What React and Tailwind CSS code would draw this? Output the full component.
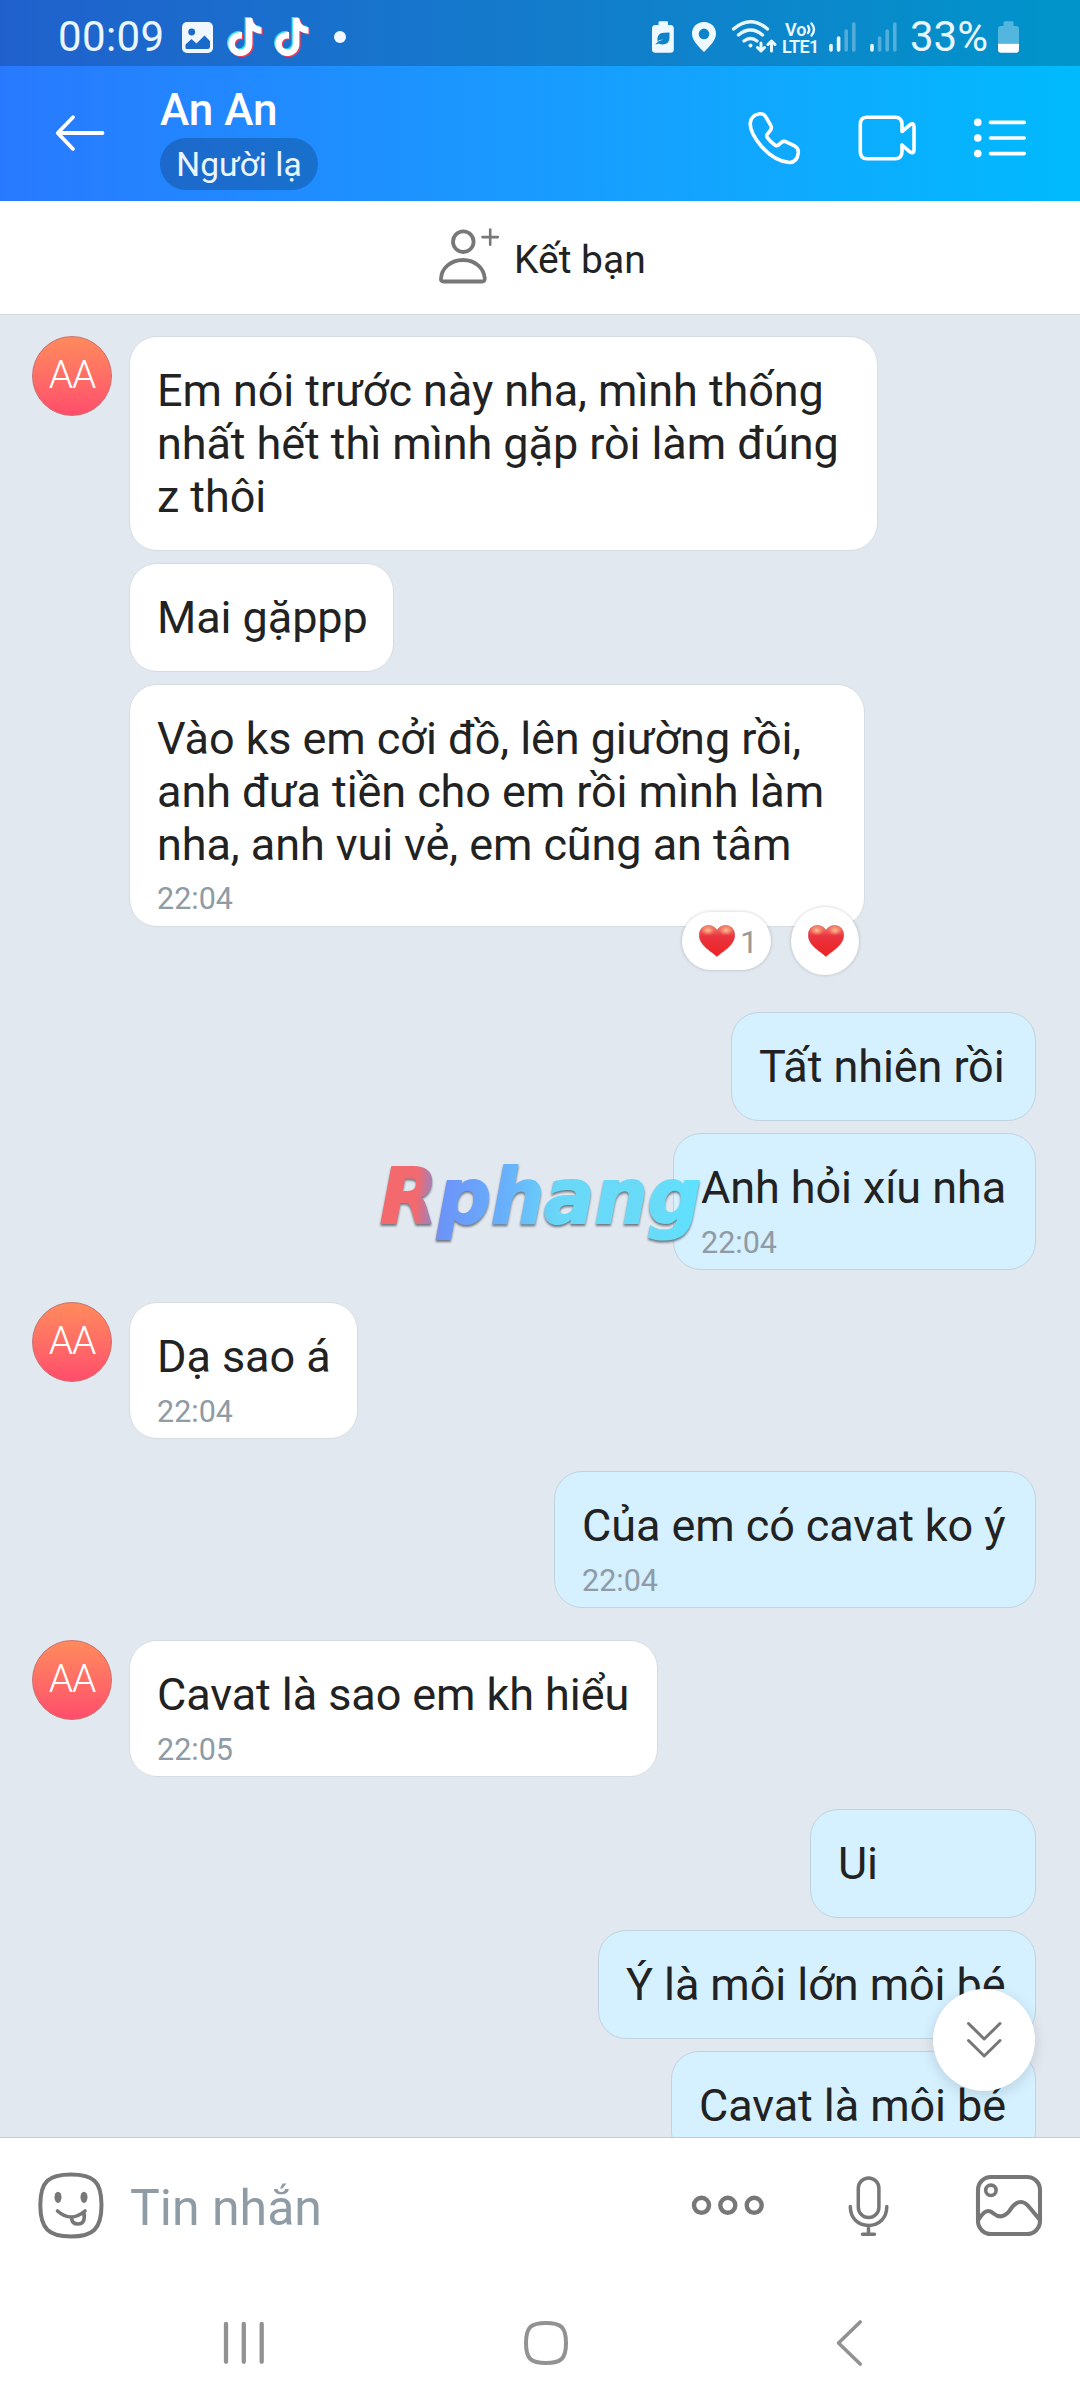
import { FaTiktok } from 'react-icons/fa6'
import clsx from 'clsx'

const groups = [
    {
        from: 'them',
        space: 'mt-[21px]',
        messages: [
            { lines: ['Em nói trước này nha, mình thống', 'nhất hết thì mình gặp ròi làm đúng', 'z thôi'], size: 'w-[749px] h-[215px]' },
            { lines: ['Mai gặppp'], size: 'w-[265px] h-[109px]' },
            {
                lines: ['Vào ks em cởi đồ, lên giường rồi,', 'anh đưa tiền cho em rồi mình làm', 'nha, anh vui vẻ, em cũng an tâm'],
                time: '22:04',
                size: 'w-[736px] h-[243px]',
                reactions: true
            }
        ]
    },
    {
        from: 'me',
        space: 'mt-[85px]',
        messages: [
            { lines: ['Tất nhiên rồi'], size: 'w-[305px] h-[109px]' },
            { lines: ['Anh hỏi xíu nha'], time: '22:04', size: 'w-[363px] h-[137px]' }
        ]
    },
    { from: 'them', space: 'mt-8', messages: [{ lines: ['Dạ sao á'], time: '22:04', size: 'w-[229px] h-[137px]' }] },
    { from: 'me', space: 'mt-8', messages: [{ lines: ['Của em có cavat ko ý'], time: '22:04', size: 'w-[482px] h-[137px]' }] },
    { from: 'them', space: 'mt-8', messages: [{ lines: ['Cavat là sao em kh hiểu'], time: '22:05', size: 'w-[529px] h-[137px]' }] },
    {
        from: 'me',
        space: 'mt-8',
        messages: [
            { lines: ['Ui'], size: 'w-[226px] h-[109px]' },
            { lines: ['Ý là môi lớn môi bé'], size: 'w-[438px] h-[109px]' },
            { lines: ['Cavat là môi bé'], size: 'w-[365px] h-[109px]' }
        ]
    }
]

// Line icon: rounded strokes, drawn at 1:1 in its viewBox
function LineIcon({ box, width = 3.6, className, children }) {
    const [, , w, h] = box.split(' ')
    return (
        <svg viewBox={box} width={w} height={h} fill="none" stroke="currentColor" strokeWidth={width} strokeLinecap="round" strokeLinejoin="round" className={clsx('block shrink-0', className)}>
            {children}
        </svg>
    )
}

function TiktokIcon({ className }) {
    return (
        <svg viewBox="0 0 36 42" width="36" height="42" className={clsx('block shrink-0', className)}>
            <FaTiktok x="-2.4" y="0" size={38} color="#35e0ee" />
            <FaTiktok x="0.2" y="2.2" size={38} color="#ee3a5f" />
            <FaTiktok x="-1.1" y="1.1" size={38} color="#ffffff" />
        </svg>
    )
}

function Signal({ active, className }) {
    const tops = [45.5, 38, 31, 24]
    return (
        <LineIcon box="829 20 28 34" width={3.6} className={className}>
            {tops.map((top, i) => (
                <path key={top} d={`M${831 + i * 7.6} ${top}V50`} opacity={i < active ? 1 : 0.33} />
            ))}
        </LineIcon>
    )
}

function StatusBar() {
    return (
        <div className="flex h-[66px] items-start bg-black/20 text-[#eaf6ff]">
            <span className="mt-[11px] ml-[58px] w-[124px] text-[42px] leading-[52px] tracking-[0.4px] whitespace-nowrap">00:09</span>
            <svg viewBox="0 0 31 31" width="31" height="31" className="mt-[22px] block shrink-0">
                <rect width="31" height="31" rx="5" fill="#f0f7ff" />
                <circle cx="9.7" cy="10" r="3.4" fill="#1a6aca" />
                <path d="M3.5 26V22.5L9.5 17L14.5 21.5L22.5 13.5L28 19V24.5Q28 27 25.5 27H5Q3.5 27 3.5 26Z" fill="#1a6aca" />
            </svg>
            <TiktokIcon className="mt-[17px] ml-[14px]" />
            <TiktokIcon className="mt-[17px] ml-[11px]" />
            <div className="mt-[31px] ml-[24px] size-3 shrink-0 rounded-full bg-[#f0f7ff]" />

            <svg viewBox="652 21 22 32" width="22" height="32" className="mt-[21px] ml-[306px] block shrink-0">
                <path d="M658.5 25V22.5Q658.5 21.3 660 21.3H666.5Q668 21.3 668 22.5V25H670.5Q673.8 25 673.8 28.5V49.5Q673.8 52.7 670.5 52.7H655.5Q652 52.7 652 49.5V28.5Q652 25 655.5 25Z" fill="#eef8ff" />
                <path d="M669.5 32.5V38Q669 44.5 662.5 44.5Q660 44.5 659 43.5L655.5 44.5Q657 41 663.5 39.5Q659 39.5 657.5 41.5Q656.5 33 664 32.8Z" fill="#0c82c8" />
            </svg>
            <svg viewBox="692 22 24 31" width="24" height="31" className="mt-[22px] ml-[18px] block shrink-0">
                <path fillRule="evenodd" d="M704 22C697 22 692 27 692 33.8C692 41 699.5 47.5 704 52C708.5 47.5 716 41 716 33.8C716 27 711 22 704 22ZM704 39.2A5.3 5.3 0 1 1 704 28.6A5.3 5.3 0 0 1 704 39.2Z" fill="#eef8ff" />
            </svg>
            <LineIcon box="730 18 47 36" width={3.4} className="mt-[18px] ml-[14px]">
                <path d="M733.5 29Q750.5 14.5 767.5 29" />
                <path d="M738.5 35Q750.5 25 762.5 35" />
                <path d="M744 41Q750.5 36 757 41" />
                <circle cx="750.5" cy="45.5" r="2" fill="currentColor" stroke="none" />
                <path d="M761 43V51M757.5 47.5L761 51L764.5 47.5M771.5 51V41M768 44.5L771.5 41L775 44.5" strokeWidth="3" />
            </LineIcon>
            <div className="mt-[21px] ml-[5px] flex w-[38px] shrink-0 flex-col text-[18px] leading-[17px] font-semibold whitespace-nowrap">
                <span className="flex pl-[3px]">
                    Vo
                    <LineIcon box="0 0 11 17" width={2.4}>
                        <path d="M2 5Q4.5 8.5 2 12M5.5 2.5Q10.5 8.5 5.5 14.5" />
                    </LineIcon>
                </span>
                <span className="tracking-[-0.6px]">LTE1</span>
            </div>
            <Signal active={2} className="mt-[20px] ml-[9px]" />
            <Signal active={1} className="mt-[20px] ml-[13px]" />
            <span className="mt-[11px] ml-[12px] w-[88px] text-[42px] leading-[52px] whitespace-nowrap">33%</span>
            <svg viewBox="1000 21 21 32" width="21" height="32" className="mt-[21px] block shrink-0">
                <path d="M1005.5 26V22.5Q1005.5 21.3 1007 21.3H1014Q1015.5 21.3 1015.5 22.5V26H1018Q1021 26 1021 29V43.7H1000V29Q1000 26 1003 26Z" fill="#52b6de" />
                <path d="M1000 43.7H1021V49.5Q1021 52.7 1018 52.7H1003Q1000 52.7 1000 49.5Z" fill="#ffffff" />
            </svg>
        </div>
    )
}

function ChatHeader() {
    return (
        <div className="flex h-[135px] items-start text-white">
            <LineIcon box="54 113 53 40" width={3.8} className="mt-[47px] ml-[54px]">
                <path d="M102.5 133H58M73 117.2L57.7 133L73 149" />
            </LineIcon>
            <div className="mt-[18px] ml-[53px] flex flex-1 flex-col items-start">
                <h1 className="text-[44px] leading-[52px] font-medium">An An</h1>
                <span className="mt-[2px] flex h-[52px] w-[158px] items-center justify-center rounded-full bg-black/20 pt-[2px] text-[33.5px] whitespace-nowrap text-[#eaf6ff]">Người lạ</span>
            </div>
            <LineIcon box="746 110 56 56" className="mt-[44px]">
                <path d="M760 113.8Q764 113.5 765.8 116.8L770.8 125.5Q772 127.8 770.5 130.2L767.2 134.3Q766 136 767.5 137.8Q770.5 141.8 774.8 145Q776.6 146.3 778.3 145L781.5 142.3Q783.6 140.7 786.2 141.8L795 146.2Q798.6 148.2 798.3 152.5Q797.3 162.3 789.5 162.5Q775 161.5 761.5 146.5Q750 133 750.2 123.5Q750.8 114.8 760 113.8Z" />
            </LineIcon>
            <LineIcon box="857 113 60 50" className="mt-[47px] ml-[55px]">
                <path d="M866 117.3H895Q902 117.3 902 124.5V131.5L909.8 125Q914 122 914 127V150Q914 154.5 909.8 151.8L902 145V151.5Q902 158.8 895 158.8H867Q860.3 158.8 860.3 151.5V124.5Q860.3 117.3 867 117.3Z" />
            </LineIcon>
            <LineIcon box="973 117 55 42" className="mt-[51px] mr-[52px] ml-[56px]">
                {[122.4, 138, 153.6].map((y) => (
                    <g key={y}>
                        <circle cx="977.8" cy={y} r="3.8" fill="currentColor" stroke="none" />
                        <path d={`M990.5 ${y}H1024.2`} />
                    </g>
                ))}
            </LineIcon>
        </div>
    )
}

function AddFriendBar() {
    return (
        <div className="flex h-[114px] items-start border-b border-[#d3d7dc] bg-white">
            <LineIcon box="436 225 66 62" width={3.8} className="mt-[24px] ml-[436px] text-[#777777]">
                <circle cx="463.3" cy="241.7" r="10.3" />
                <path d="M463 260C450 260 441.5 269 441 278.5Q440.8 281.5 443.5 281.5H482Q485 281.5 484.8 278.5C484 269 476 260 463 260Z" />
                <path d="M490.2 229.5V244.7M482.5 237.1H497.8" strokeWidth="2.6" />
            </LineIcon>
            <span className="mt-[36px] ml-[12px] text-[39px] leading-[46px] text-[#222222]">Kết bạn</span>
        </div>
    )
}

function Heart() {
    return (
        <svg viewBox="0 0 36 32" width="36" height="32" className="block shrink-0">
            <defs>
                <linearGradient id="heart" x1="0" y1="0" x2="0" y2="1">
                    <stop offset="0" stopColor="#f4806a" />
                    <stop offset="0.35" stopColor="#ea3440" />
                    <stop offset="1" stopColor="#ee2222" />
                </linearGradient>
                <radialGradient id="shine">
                    <stop offset="0" stopColor="#ffcf9d" stopOpacity="0.9" />
                    <stop offset="1" stopColor="#ffb080" stopOpacity="0" />
                </radialGradient>
            </defs>
            <path d="M18 31.5C12 26 0.3 20.5 0.3 10C0.3 4 4.5 0.4 9.5 0.4C13.5 0.4 16.5 2.5 18 5.5C19.5 2.5 22.5 0.4 26.5 0.4C31.5 0.4 35.7 4 35.7 10C35.7 20.5 24 26 18 31.5Z" fill="url(#heart)" stroke="#c23a3a" strokeWidth="0.5" />
            <ellipse cx="9" cy="5.5" rx="7" ry="5" fill="url(#shine)" />
            <ellipse cx="27" cy="5.5" rx="7" ry="5" fill="url(#shine)" />
        </svg>
    )
}

function Reactions() {
    return (
        <div className="absolute top-[222px] right-[5px] flex items-center gap-[20px]">
            <div className="flex h-[58px] w-[89px] items-center rounded-full bg-white pl-[17px] shadow-[0_0_3px_1px_rgba(0,0,0,0.12)]">
                <Heart />
                <span className="mt-[2px] ml-[5px] text-[32px] leading-none text-[#999999]">1</span>
            </div>
            <div className="flex size-[68px] items-center justify-center rounded-full bg-white pl-[1px] shadow-[0_0_3px_1px_rgba(0,0,0,0.12)]">
                <Heart />
            </div>
        </div>
    )
}

function Bubble({ message, mine }) {
    return (
        <div
            className={clsx(
                'relative rounded-[28px] border pt-[28px] pl-[27px] whitespace-nowrap',
                message.size,
                mine ? 'border-[#c0d3df] bg-[#d5f0ff]' : 'border-[#d7dce2] bg-white'
            )}
        >
            {message.lines.map((line) => (
                <p key={line} className="text-[45px] leading-[52.8px] tracking-[-0.08px] text-[#222222]">{line}</p>
            ))}
            {message.time && <p className="mt-[10px] text-[30.5px] leading-[35px] text-[#8f9ba5]">{message.time}</p>}
            {message.reactions && <Reactions />}
        </div>
    )
}

function Group({ group }) {
    const mine = group.from === 'me'
    return (
        <div className={clsx('flex shrink-0', group.space, mine ? 'justify-end pr-[44px]' : 'pl-[32px]')}>
            {!mine && (
                <div className="flex size-20 shrink-0 items-center justify-center rounded-full border border-[#c9706c] bg-linear-to-b from-[#ff8a5c] to-[#ff4c6c] pb-[2px] text-[39px] font-light tracking-[-1px] text-white">
                    AA
                </div>
            )}
            <div className={clsx('flex flex-col gap-3', mine ? 'items-end' : 'ml-[17px] items-start')}>
                {group.messages.map((message) => (
                    <Bubble key={message.lines[0]} message={message} mine={mine} />
                ))}
            </div>
        </div>
    )
}

function Watermark() {
    return (
        <svg viewBox="0 0 350 120" width="350" height="120" className="absolute top-[829px] left-[370px]">
            <defs>
                <linearGradient id="brand" gradientUnits="userSpaceOnUse" x1="8" y1="50" x2="332" y2="70">
                    <stop offset="0" stopColor="#f5686a" />
                    <stop offset="0.12" stopColor="#f06a70" />
                    <stop offset="0.18" stopColor="#8b86cf" />
                    <stop offset="0.2" stopColor="#6c94f9" />
                    <stop offset="0.38" stopColor="#68aefb" />
                    <stop offset="0.56" stopColor="#69d8f8" />
                    <stop offset="0.85" stopColor="#68dbf8" />
                    <stop offset="1" stopColor="#5ee2ff" />
                </linearGradient>
            </defs>
            <text
                x="10"
                y="79"
                textLength="321"
                lengthAdjust="spacingAndGlyphs"
                fill="url(#brand)"
                stroke="url(#brand)"
                strokeWidth="2"
                className="font-['DejaVu_Sans'] text-[76px] font-bold italic drop-shadow-[0_2px_1px_rgba(60,70,80,0.7)]"
            >
                Rphang
            </text>
        </svg>
    )
}

function Composer() {
    return (
        <div className="flex h-[137px] items-start border-t border-[#c6cacf] text-[#777777]">
            <LineIcon box="36 2170 70 70" width={4} className="mt-[32px] ml-[36px]">
                <path d="M71 2174.5C93 2174.5 101.5 2181 101.5 2205C101.5 2229 93 2236.5 71 2236.5C49 2236.5 40.3 2229 40.3 2205C40.3 2181 49 2174.5 71 2174.5Z" />
                <ellipse cx="58" cy="2197.3" rx="3.5" ry="5.6" fill="currentColor" stroke="none" />
                <ellipse cx="84" cy="2197.3" rx="3.5" ry="5.6" fill="currentColor" stroke="none" />
                <path d="M57.5 2211Q71 2223 85 2211M71.5 2218Q72 2224 78 2224Q85.5 2224 84 2213.5" strokeWidth="3.6" />
            </LineIcon>
            <span className="mt-[41px] ml-[24px] flex-1 text-[50px] leading-[58px] text-[#8f9ca6]">Tin nhắn</span>
            <LineIcon box="690 2194 76 23" width={4.4} className="mt-[56px]">
                <circle cx="701.5" cy="2205.3" r="7.5" />
                <circle cx="727.8" cy="2205.3" r="7.5" />
                <circle cx="754.2" cy="2205.3" r="7.5" />
            </LineIcon>
            <LineIcon box="846 2174 45 64" width={3.5} className="mt-[36px] ml-[80px]">
                <rect x="858.3" y="2178" width="20.6" height="39.5" rx="10.3" />
                <path d="M850.3 2206.5C850.3 2218 858 2225.5 868.5 2225.5C879 2225.5 886.8 2218 886.8 2206.5M868.5 2226V2234M862.5 2234.3H874.5" />
            </LineIcon>
            <LineIcon box="974 2172 70 66" width={4.1} className="mt-[34px] mr-[36px] ml-[83px]">
                <rect x="978" y="2177" width="62" height="57" rx="13" />
                <circle cx="990.9" cy="2190.3" r="5.2" strokeWidth="3.6" />
                <path d="M979 2219Q986.5 2206.5 993.5 2213.5Q1001.5 2220 1009 2211.5Q1015 2202 1020.5 2202Q1025 2201.5 1030 2208L1039.5 2219.5" />
            </LineIcon>
        </div>
    )
}

function NavBar() {
    return (
        <div className="flex h-[134px] items-start text-[#929292]">
            <LineIcon box="222 2319 44 48" width={4.3} className="mt-[45px] ml-[222px]">
                <path d="M226 2324V2361.8M243.8 2324V2361.8M261.7 2324V2361.8" />
            </LineIcon>
            <LineIcon box="522 2319 48 48" width={4} className="mt-[45px] ml-[256px]">
                <path d="M546 2323C561 2323 566 2327 566 2343C566 2359 561 2363 546 2363C531 2363 526 2359 526 2343C526 2327 531 2323 546 2323Z" />
            </LineIcon>
            <LineIcon box="834 2318 30 50" width={3.6} className="mt-[44px] ml-[264px]">
                <path d="M860.2 2322L838.5 2343L860.2 2364" />
            </LineIcon>
        </div>
    )
}

export default function App() {
    return (
        <div className="flex h-[2408px] w-[1080px] flex-col overflow-hidden bg-white font-[Roboto,sans-serif]">
            <header className="bg-linear-to-r from-[#2879ff] to-[#00bafd]">
                <StatusBar />
                <ChatHeader />
            </header>
            <AddFriendBar />
            <main className="relative flex h-[1822px] shrink-0 flex-col overflow-hidden bg-[#e2e8f0]">
                {groups.map((group, i) => (
                    <Group key={i} group={group} />
                ))}
                <Watermark />
                {/* Scroll to latest */}
                <button className="absolute top-[1674px] left-[933px] flex size-[102px] items-center justify-center rounded-full bg-white text-[#777777] shadow-[0_4px_14px_rgba(0,0,0,0.13)]">
                    <LineIcon box="964 2021 40 40" width={3}>
                        <path d="M968.5 2024.5L984.2 2040L1000 2024.5M968.5 2041.5L984.2 2057L1000 2041.5" />
                    </LineIcon>
                </button>
            </main>
            <Composer />
            <NavBar />
        </div>
    )
}
